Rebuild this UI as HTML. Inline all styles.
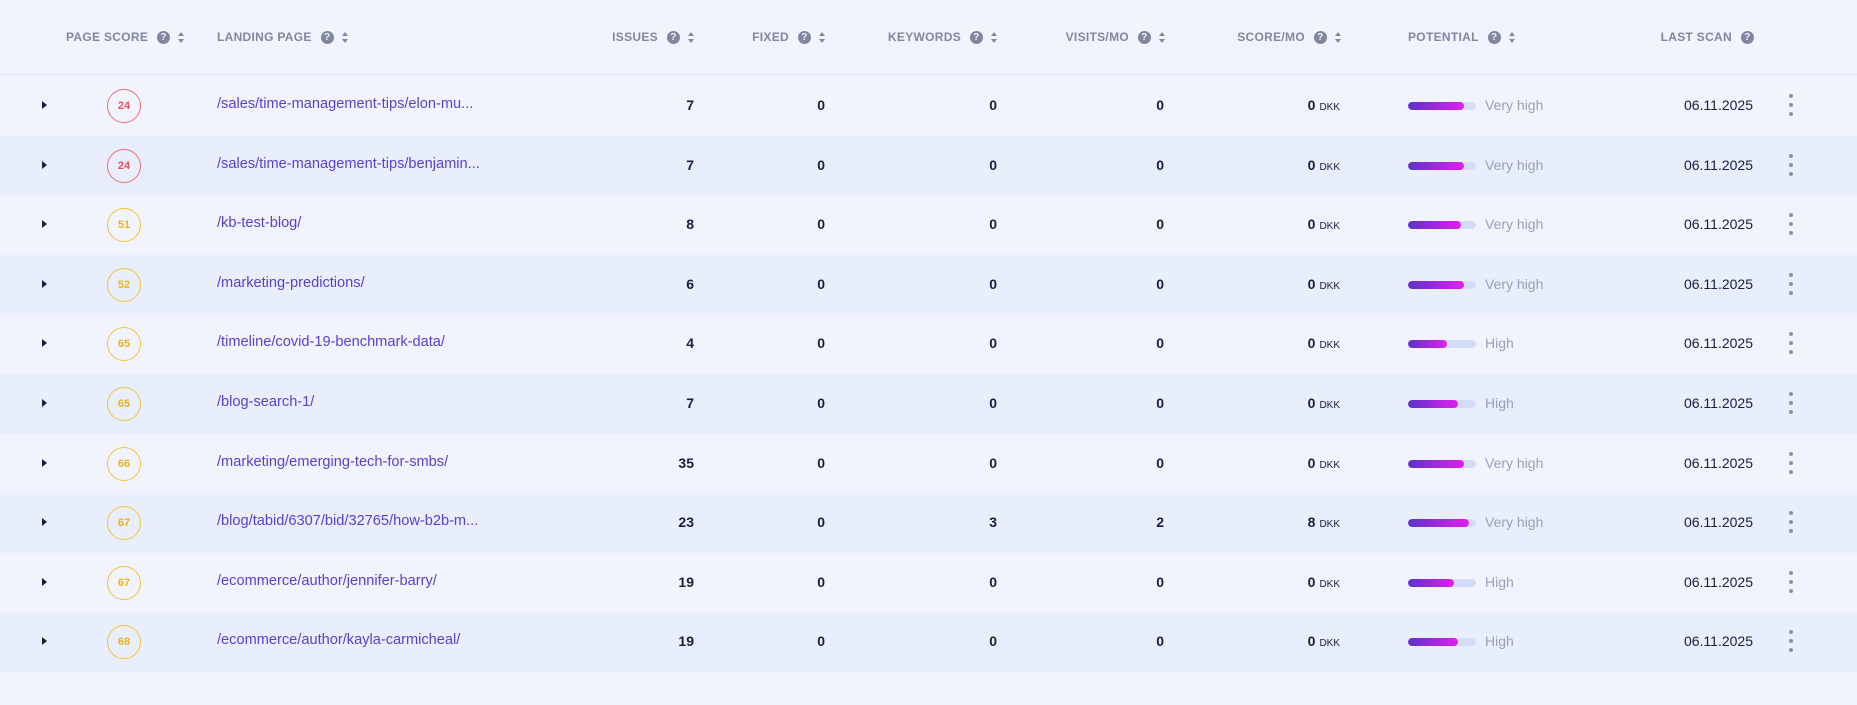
<!DOCTYPE html>
<html><head><meta charset="utf-8"><style>
*{margin:0;padding:0;box-sizing:border-box}
body{width:1857px;height:705px;background:#f1f4fe;font-family:"Liberation Sans",sans-serif;position:relative;overflow:hidden}
.hdr{position:absolute;top:0;left:0;width:1857px;height:75px;border-bottom:1px solid #dfe5f5}
.h{position:absolute;top:30px;font-size:12px;font-weight:bold;color:#80879f;letter-spacing:.3px;display:flex;align-items:center;white-space:nowrap}
.q{display:inline-block;width:13px;height:13px;border-radius:50%;background:#80879f;color:#f1f4fe;font-size:10px;line-height:13px;text-align:center;margin-left:9px}
.s{display:inline-block;margin-left:8px;width:6px;height:11px;position:relative}
.s:before,.s:after{content:"";position:absolute;left:0;border-left:3px solid transparent;border-right:3px solid transparent}
.s:before{top:0;border-bottom:4px solid #80879f}
.s:after{bottom:0;border-top:4px solid #80879f}
.row{position:absolute;left:0;width:1857px;height:60px}
.row.alt{background:#e8eefc}
.row>*{position:absolute}
.caret{left:42px;top:25px;width:0;height:0;border-top:4px solid transparent;border-bottom:4px solid transparent;border-left:5px solid #1a1c40}
.sc{left:107px;top:13px;width:34px;height:34px;border-radius:50%;border:1px solid;font-size:11px;font-weight:bold;text-align:center;line-height:32px}
.red{border-color:#f56a72;color:#f24d58}
.yel{border-color:#f4c430;color:#eeb21c}
.lk{left:217px;top:20px;font-size:14.6px;color:#5a3fd0}
.n{top:21px;font-size:14px;font-weight:bold;color:#1a1c40;text-align:right;width:60px}
.dkk{top:21px;left:1260px;width:80px;text-align:right;font-size:14px;font-weight:bold;color:#1a1c40}
.dkk span{font-size:10px;font-weight:normal;margin-left:4px}
.bar{left:1408px;top:26px;width:68px;height:8px;border-radius:4px;background:#d5dcfa;overflow:hidden}
.bar i{display:block;height:8px;border-radius:4px;background:linear-gradient(90deg,#5b33c9,#e020ee)}
.pt{left:1485px;top:21px;font-size:14px;color:#9aa0b5}
.dt{left:1650px;width:103px;text-align:right;top:21px;font-size:14px;color:#1a1c40}
.dots{left:1789px;top:18px;width:5px}
.dots b{display:block;width:4px;height:4px;border-radius:50%;background:#8b92aa;margin-bottom:5px}
</style></head><body>
<div class="hdr">
<div class="h" style="left:66px">PAGE SCORE<span class="q">?</span><span class="s"></span></div>
<div class="h" style="left:217px">LANDING PAGE<span class="q">?</span><span class="s"></span></div>
<div class="h" style="right:1163px">ISSUES<span class="q">?</span><span class="s"></span></div>
<div class="h" style="right:1032px">FIXED<span class="q">?</span><span class="s"></span></div>
<div class="h" style="right:860px">KEYWORDS<span class="q">?</span><span class="s"></span></div>
<div class="h" style="right:692px">VISITS/MO<span class="q">?</span><span class="s"></span></div>
<div class="h" style="right:516px">SCORE/MO<span class="q">?</span><span class="s"></span></div>
<div class="h" style="left:1408px">POTENTIAL<span class="q">?</span><span class="s"></span></div>
<div class="h" style="right:103px">LAST SCAN<span class="q">?</span></div>
</div>

<div class="row" style="top:76px"><i class="caret"></i><div class="sc red">24</div><div class="lk">/sales/time-management-tips/elon-mu...</div><div class="n" style="left:634px">7</div><div class="n" style="left:765px">0</div><div class="n" style="left:937px">0</div><div class="n" style="left:1104px">0</div><div class="dkk">0<span>DKK</span></div><div class="bar"><i style="width:56px"></i></div><div class="pt">Very high</div><div class="dt">06.11.2025</div><div class="dots"><b></b><b></b><b></b></div></div>
<div class="row alt" style="top:135.6px"><i class="caret"></i><div class="sc red">24</div><div class="lk">/sales/time-management-tips/benjamin...</div><div class="n" style="left:634px">7</div><div class="n" style="left:765px">0</div><div class="n" style="left:937px">0</div><div class="n" style="left:1104px">0</div><div class="dkk">0<span>DKK</span></div><div class="bar"><i style="width:56px"></i></div><div class="pt">Very high</div><div class="dt">06.11.2025</div><div class="dots"><b></b><b></b><b></b></div></div>
<div class="row" style="top:195.2px"><i class="caret"></i><div class="sc yel">51</div><div class="lk">/kb-test-blog/</div><div class="n" style="left:634px">8</div><div class="n" style="left:765px">0</div><div class="n" style="left:937px">0</div><div class="n" style="left:1104px">0</div><div class="dkk">0<span>DKK</span></div><div class="bar"><i style="width:53px"></i></div><div class="pt">Very high</div><div class="dt">06.11.2025</div><div class="dots"><b></b><b></b><b></b></div></div>
<div class="row alt" style="top:254.8px"><i class="caret"></i><div class="sc yel">52</div><div class="lk">/marketing-predictions/</div><div class="n" style="left:634px">6</div><div class="n" style="left:765px">0</div><div class="n" style="left:937px">0</div><div class="n" style="left:1104px">0</div><div class="dkk">0<span>DKK</span></div><div class="bar"><i style="width:56px"></i></div><div class="pt">Very high</div><div class="dt">06.11.2025</div><div class="dots"><b></b><b></b><b></b></div></div>
<div class="row" style="top:314.4px"><i class="caret"></i><div class="sc yel">65</div><div class="lk">/timeline/covid-19-benchmark-data/</div><div class="n" style="left:634px">4</div><div class="n" style="left:765px">0</div><div class="n" style="left:937px">0</div><div class="n" style="left:1104px">0</div><div class="dkk">0<span>DKK</span></div><div class="bar"><i style="width:39px"></i></div><div class="pt">High</div><div class="dt">06.11.2025</div><div class="dots"><b></b><b></b><b></b></div></div>
<div class="row alt" style="top:374px"><i class="caret"></i><div class="sc yel">65</div><div class="lk">/blog-search-1/</div><div class="n" style="left:634px">7</div><div class="n" style="left:765px">0</div><div class="n" style="left:937px">0</div><div class="n" style="left:1104px">0</div><div class="dkk">0<span>DKK</span></div><div class="bar"><i style="width:50px"></i></div><div class="pt">High</div><div class="dt">06.11.2025</div><div class="dots"><b></b><b></b><b></b></div></div>
<div class="row" style="top:433.6px"><i class="caret"></i><div class="sc yel">66</div><div class="lk">/marketing/emerging-tech-for-smbs/</div><div class="n" style="left:634px">35</div><div class="n" style="left:765px">0</div><div class="n" style="left:937px">0</div><div class="n" style="left:1104px">0</div><div class="dkk">0<span>DKK</span></div><div class="bar"><i style="width:56px"></i></div><div class="pt">Very high</div><div class="dt">06.11.2025</div><div class="dots"><b></b><b></b><b></b></div></div>
<div class="row alt" style="top:493.2px"><i class="caret"></i><div class="sc yel">67</div><div class="lk">/blog/tabid/6307/bid/32765/how-b2b-m...</div><div class="n" style="left:634px">23</div><div class="n" style="left:765px">0</div><div class="n" style="left:937px">3</div><div class="n" style="left:1104px">2</div><div class="dkk">8<span>DKK</span></div><div class="bar"><i style="width:61px"></i></div><div class="pt">Very high</div><div class="dt">06.11.2025</div><div class="dots"><b></b><b></b><b></b></div></div>
<div class="row" style="top:552.8px"><i class="caret"></i><div class="sc yel">67</div><div class="lk">/ecommerce/author/jennifer-barry/</div><div class="n" style="left:634px">19</div><div class="n" style="left:765px">0</div><div class="n" style="left:937px">0</div><div class="n" style="left:1104px">0</div><div class="dkk">0<span>DKK</span></div><div class="bar"><i style="width:46px"></i></div><div class="pt">High</div><div class="dt">06.11.2025</div><div class="dots"><b></b><b></b><b></b></div></div>
<div class="row alt" style="top:612.4px"><i class="caret"></i><div class="sc yel">68</div><div class="lk">/ecommerce/author/kayla-carmicheal/</div><div class="n" style="left:634px">19</div><div class="n" style="left:765px">0</div><div class="n" style="left:937px">0</div><div class="n" style="left:1104px">0</div><div class="dkk">0<span>DKK</span></div><div class="bar"><i style="width:50px"></i></div><div class="pt">High</div><div class="dt">06.11.2025</div><div class="dots"><b></b><b></b><b></b></div></div>
</body></html>
